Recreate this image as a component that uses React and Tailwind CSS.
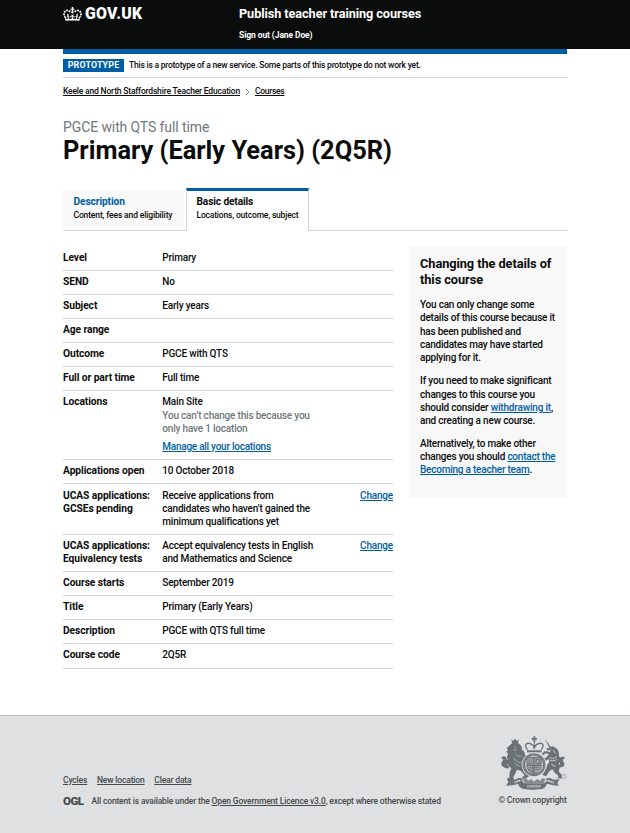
import React from "react";

const link = "underline decoration-1 underline-offset-[1px]";
const blueLink = `${link} text-[#005ea5]`;

function Crown() {
  return (
    <svg viewBox="0 0 132 97" className="h-[14px] w-[19px] shrink-0" fill="#fff">
      <path
        fillRule="evenodd"
        d="M25 30.2c3.5 1.5 7.7-.2 9.1-3.7 1.5-3.6-.2-7.8-3.9-9.2-3.6-1.4-7.6.3-9.1 3.9-1.4 3.5.3 7.5 3.9 9zM9 39.5c3.6 1.5 7.8-.2 9.2-3.7 1.5-3.6-.2-7.8-3.9-9.1-3.6-1.5-7.6.2-9.1 3.8-1.4 3.5.3 7.5 3.8 9zM4.4 57.2c3.5 1.5 7.7-.2 9.1-3.8 1.5-3.6-.2-7.7-3.9-9.1-3.5-1.5-7.6.3-9.1 3.8-1.4 3.5.3 7.6 3.9 9.1zm38.3-21.4c3.5 1.5 7.7-.2 9.1-3.8 1.5-3.6-.2-7.7-3.9-9.1-3.6-1.5-7.6.3-9.1 3.8-1.3 3.6.4 7.7 3.9 9.1zm64.4-5.6c-3.6 1.5-7.8-.2-9.1-3.7-1.5-3.6.2-7.8 3.8-9.2 3.6-1.4 7.7.3 9.2 3.9 1.3 3.5-.4 7.5-3.9 9zm15.9 9.3c-3.6 1.5-7.7-.2-9.1-3.7-1.5-3.6.2-7.8 3.7-9.1 3.6-1.5 7.7.2 9.2 3.8 1.5 3.5-.3 7.5-3.8 9zm4.7 17.7c-3.6 1.5-7.8-.2-9.2-3.8-1.5-3.6.2-7.7 3.9-9.1 3.6-1.5 7.7.3 9.2 3.8 1.3 3.5-.4 7.6-3.9 9.1zM89.3 35.8c-3.6 1.5-7.8-.2-9.2-3.8-1.4-3.6.2-7.7 3.9-9.1 3.6-1.5 7.7.3 9.2 3.8 1.4 3.6-.3 7.7-3.9 9.1zM69.7 17.7l8.9 4.7V9.3l-8.9 2.8c-.2-.3-.5-.6-.9-.9L72.4 0H59.6l3.5 11.2c-.3.3-.6.5-.9.9l-8.8-2.8v13.1l8.8-4.7c.3.3.6.7.9.9l-5 15.4v.1c-.2.8-.4 1.6-.4 2.4 0 4.1 3.1 7.5 7 8.1h.2c.3 0 .7.1 1 .1.4 0 .7 0 1-.1h.2c4-.6 7.1-4.1 7.1-8.1 0-.8-.1-1.7-.4-2.4V34l-5.1-15.4c.4-.2.7-.6 1-.9zM66 92.8c16.9 0 32.8 1.1 47.1 3.2 4-16.9 8.9-26.7 14-33.5l-9.6-3.4c1 4.9 1.1 7.2 0 10.2-1.5-1.4-3-4.3-4.2-8.7L108.6 76c2.8-2 5-3.2 7.5-3.3-4.4 9.4-10 11.9-13.6 11.2-4.3-.8-6.3-4.6-5.6-7.9 1-4.7 5.7-5.9 8-.5 4.3-8.7-3-11.4-7.6-8.8 7.1-7.2 7.9-13.5 2.1-21.1-8 6.1-8.1 12.3-4.5 20.8-4.7-5.4-12.1-2.5-9.5 6.2 3.4-5.2 7.9-2 7.2 3.1-.6 4.3-6.4 7.8-13.5 7.2-10.3-.9-10.9-8-11.2-13.8 2.5-.5 7.1 1.8 11 7.3L80.2 60c-4.1 4.4-8 5.3-12.3 5.4 1.4-4.4 8-11.6 8-11.6H55.5s6.4 7.2 7.9 11.6c-4.2-.1-8-1-12.3-5.4l1.4 16.4c3.9-5.5 8.5-7.7 10.9-7.3-.3 5.8-.9 12.8-11.1 13.8-7.2.6-12.9-2.9-13.5-7.2-.7-5 3.8-8.3 7.1-3.1 2.7-8.7-4.6-11.6-9.4-6.2 3.7-8.5 3.6-14.7-4.6-20.8-5.8 7.6-5 13.9 2.2 21.1-4.7-2.6-11.9.1-7.7 8.8 2.3-5.5 7.1-4.2 8.1.5.7 3.3-1.3 7.1-5.7 7.9-3.5.7-9-1.8-13.5-11.2 2.5.1 4.7 1.3 7.5 3.3l-4.7-15.4c-1.2 4.4-2.7 7.2-4.3 8.7-1.1-3-.9-5.3 0-10.2l-9.5 3.4c5 6.9 9.9 16.7 14 33.5 14.8-2.1 30.8-3.2 47.7-3.2z"
      />
    </svg>
  );
}

/* Royal coat of arms: lion, crowned garter shield, unicorn, motto ribbon */
function Crest() {
  return (
    <svg viewBox="0 0 228 192" className="h-16 w-[76px] shrink-0" fill="#6b7276" stroke="none">
      {/* crown */}
      <path d="M115 13h6v5h5v5h-5v6h-6v-6h-5v-5h5z" />
      <g fill="none" stroke="#6b7276" strokeWidth="4">
        <path d="M98 53C86 40 93 32 103 34c8 2 14 6 15 16 1-10 7-14 15-16 10-2 17 6 5 19" />
        <path d="M118 30v20" strokeWidth="3" />
        <path d="M96 58h44" strokeWidth="6" />
      </g>
      {/* lion */}
      <path d="M49 22l5 5 6-7 6 7 5-5-2 11H51z" />
      <path d="M49 35c6-4 20-4 25 1 6 6 8 12 6 18 8 2 10 8 9 14l8 4-3 7-9-1c4 8 6 16 4 23l-1 4c4 6 8 10 11 14 4 6 5 11 1 16l-14 6-6-4 9-7-12-14-12-3c-2 8-6 16-10 21l4 12-21 1-2-7 8-4c-3-9 2-20 5-28-6-2-9-6-11-12l-7 6-8-3 5-6-6-5 16-5c-3-7-2-13 2-18l-7-6 6-4-4-6z" />
      <path d="M40 110c-20-3-25-14-18-22 4-5 2-9-4-8 4-12 20-7 17 5-3 8-6 13 7 17z" />
      <path d="M57 44l7 2M56 54l9-2M62 66c5 7 11 8 18 7M56 78c6 10 14 14 24 15M58 92c5 7 10 9 16 10" fill="none" stroke="#c6c9cb" strokeWidth="2" />
      {/* unicorn */}
      <path d="M149 20l21 28-4 4z" />
      <path d="M164 48l8-6 5 4c11 3 16 14 15 25 5 8 4 17-1 23 4 8 3 17 0 24l11 13-3 9-10-2 1-6-12-11-6-9-8 5-11 16-11-4 12-20c2-9 4-15 9-19l-2-9-10 6-8-3 1-6 9-1 9-11-11-2-6 6-5-4 9-9 15 3 5-8-11 5-4-8z" />
      <path d="M189 107c18 0 23-8 17-17-4-6-2-11 6-12-12-9-25 1-19 12 3 6 2 9-5 9z" />
      <path d="M163 76c8 5 17 3 23-3M165 85c8 3 16 1 21-3M175 55l6 9M169 97l12 6" fill="none" stroke="#dee0e2" strokeWidth="2.4" />
      {/* garter and shield */}
      <circle cx="117" cy="98" r="37" fill="#dee0e2" />
      <circle cx="117" cy="98" r="33" fill="#c2c5c8" />
      <circle cx="117" cy="98" r="31" fill="none" stroke="#6b7276" strokeWidth="7" />
      <circle cx="117" cy="98" r="31" fill="none" stroke="#b9bdc0" strokeWidth="2" strokeDasharray="3 3" />
      <path d="M96 77h42v25c0 12-12 19-21 24-9-5-21-12-21-24z" fill="#a3a8ab" stroke="#6b7276" strokeWidth="3" />
      <path d="M117 77v48M96 100h42" stroke="#6b7276" strokeWidth="4" />
      <path d="M100 84h13M100 90h13M100 95h13M121 106h13M121 112h11" stroke="#6b7276" strokeWidth="3.4" strokeDasharray="5 2" />
      <path d="M123 82h11v13h-11zM101 115l4-10 5 4 3-5v14z" fill="none" stroke="#6b7276" strokeWidth="3" />
      {/* ribbon */}
      <path d="M40 144l20-1c8-5 17-7 23-3-3 6 0 11 5 14l58 0c7-3 9-8 6-14 8-4 17-2 23 3l20-1-8 9 4 10-18-1c-9-2-12-5-18-3-3 10-11 15-21 15-18 2-34 1-48-1-9-1-14-7-16-14-7-2-12 2-19 3l-18 1 6-9z" />
      <path d="M58 152c8-1 11-6 18-6M154 146c8-1 14 4 22 6M97 163h40" fill="none" stroke="#dee0e2" strokeWidth="5" />
      <path d="M60 152l15-5M156 147l18 5M99 163h37" fill="none" stroke="#6b7276" strokeWidth="3" strokeDasharray="3 2" />
      <path d="M88 153l-4-12 8-4 8 9 8-5 9 8 10-8 8 5 8-8 8 4-5 11-29 4z" fill="#858b8f" />
      <path d="M187 126c8 4 4 12-3 10M199 130c9-6 18 0 11 8-6 4-12 0-11-8" fill="none" stroke="#858b8f" strokeWidth="2" />
    </svg>
  );
}

function Row({ h, pad = "pt-1", label, action, children }) {
  return (
    <div className={`${h} ${pad} flex border-b border-[#d3d5d6]`}>
      <dt className="w-[99.3px] shrink-0 whitespace-nowrap text-[10.25px] font-bold tracking-[-0.08px]">{label}</dt>
      <dd className="grow whitespace-nowrap">{children}</dd>
      {action && <dd className="shrink-0"><a className={blueLink}>Change</a></dd>}
    </div>
  );
}

export default function App() {
  return (
    <div className="flex h-[833px] w-[630px] flex-col overflow-hidden bg-white font-['Roboto','Liberation_Sans',sans-serif] text-[10px] leading-[13.1px] font-medium tracking-[-0.19px] text-[#0b0c0c]">
      <header className="h-[49px] shrink-0 bg-[#0b0c0c] px-[63px] text-white">
        <div className="flex">
          <div className="flex w-[176px] items-center gap-[3px] self-start pt-[5px]">
            <Crown />
            <span className="text-[15.8px] leading-[18px] font-black tracking-[0.3px]">GOV.UK</span>
          </div>
          <div className="font-bold">
            <div className="pt-[5px] text-[12.7px] leading-[18px] tracking-[-0.07px]">Publish teacher training courses</div>
            <div className="pt-[6px] text-[8.5px] leading-3 tracking-[-0.1px]">Sign out (Jane Doe)</div>
          </div>
        </div>
      </header>

      <div className="mx-[63px] h-[5px] shrink-0 bg-[#005ea5]" />

      <main className="mx-[63px] flex h-[661px] shrink-0 flex-col">
        <div className="flex h-6 shrink-0 items-center gap-[5px] border-b border-[#d3d5d6]">
          <strong className="flex h-[13px] w-[61px] items-center justify-center bg-[#005ea5] text-[8.8px] tracking-[0.2px] text-white">PROTOTYPE</strong>
          <span className="pt-px text-[8.5px] tracking-[-0.22px] whitespace-nowrap">This is a prototype of a new service. Some parts of this prototype do not work yet.</span>
        </div>

        <nav className="flex h-[26px] shrink-0 items-center pt-px text-[8.5px] tracking-[-0.18px]">
          <a className={link}>Keele and North Staffordshire Teacher Education</a>
          <svg viewBox="0 0 5 8" className="mx-[5px] h-2 w-[5px]" fill="none" stroke="#8a8f92"><path d="M1 1l3 3-3 3" /></svg>
          <a className={`${link} tracking-[-0.29px]`}>Courses</a>
        </nav>

        <div className="mt-[14px] text-[14px] leading-[18px] font-normal tracking-[-0.1px] text-[#6f777b]">PGCE with QTS full time</div>
        <h1 className="mt-px text-[25.4px] leading-[26px] font-bold tracking-[0px]">Primary (Early Years) (2Q5R)</h1>

        <div className="mt-[25px] flex h-[43px] shrink-0 text-[8.5px] leading-[13px] tracking-[-0.14px] whitespace-nowrap">
          <div className="w-[122.5px] border-b border-[#d3d5d6] pt-[2px]">
            <div className="h-[37px] w-[121px] bg-[#f8f8f8] px-[10.5px] pt-[5px]">
              <div className="text-[10.2px] font-bold tracking-[-0.1px] text-[#005ea5]">Description</div>
              <div className="pt-px">Content, fees and eligibility</div>
            </div>
          </div>
          <div className="w-[123.5px] border-x border-t-[3px] border-x-[#d3d5d6] border-t-[#005ea5] px-[10px] pt-1">
            <div className="text-[10.2px] font-bold">Basic details</div>
            <div className="pt-px tracking-[-0.18px]">Locations, outcome, subject</div>
          </div>
          <div className="grow border-b border-[#d3d5d6]" />
        </div>

        <div className="mt-[15px] flex items-start justify-between">
          <dl className="w-[330px]">
            <Row h="h-[25px]" pad="pt-[5px]" label="Level">Primary</Row>
            <Row h="h-6" label="SEND">No</Row>
            <Row h="h-6" label="Subject">Early years</Row>
            <Row h="h-6" label="Age range" />
            <Row h="h-6" label="Outcome">PGCE with QTS</Row>
            <Row h="h-6" label="Full or part time">Full time</Row>
            <Row h="h-[69px]" label="Locations">
              Main Site
              <div className="mt-[0.6px] text-[#6f777b]">You can’t change this because you<br />only have 1 location</div>
              <div className="mt-[5px]"><a className={`${blueLink} tracking-[-0.25px]`}>Manage all your locations</a></div>
            </Row>
            <Row h="h-6" label="Applications open">10 October 2018</Row>
            <Row h="h-[51px]" pad="pt-[5px]" label={<>UCAS applications:<br />GCSEs pending</>} action>
              Receive applications from<br />candidates who haven’t gained the<br />minimum qualifications yet
            </Row>
            <Row h="h-[37px]" label={<>UCAS applications:<br />Equivalency tests</>} action>
              Accept equivalency tests in English<br />and Mathematics and Science
            </Row>
            <Row h="h-6" label="Course starts">September 2019</Row>
            <Row h="h-6" label="Title">Primary (Early Years)</Row>
            <Row h="h-6" label="Description">PGCE with QTS full time</Row>
            <Row h="h-[25px]" label="Course code">2Q5R</Row>
          </dl>

          <aside className="h-[252px] w-[157.5px] bg-[#f8f8f8] px-[10.5px] pt-[10px] leading-[13.25px] whitespace-nowrap">
            <h2 className="text-[12.8px] leading-4 font-bold tracking-[-0.08px]">Changing the details of<br />this course</h2>
            <p className="mt-[10px] tracking-[-0.22px]">You can only change some<br />details of this course because it<br />has been published and<br />candidates may have started<br />applying for it.</p>
            <p className="mt-[10px]">If you need to make significant<br />changes to this course you<br />should consider <a className={blueLink}>withdrawing it</a>,<br />and creating a new course.</p>
            <p className="mt-[9.5px] tracking-[-0.22px]">Alternatively, to make other<br />changes you should <a className={blueLink}>contact the</a><br /><a className={blueLink}>Becoming a teacher team</a>.</p>
          </aside>
        </div>
      </main>

      <footer className="flex grow items-start justify-between border-t border-[#bfc1c3] bg-[#dee0e2] px-[63px] text-[8.5px] leading-3 tracking-[-0.16px] whitespace-nowrap text-[#454a4c]">
        <div className="pt-[57.5px]">
          <div className="flex gap-[9.7px]">
            <a className={link}>Cycles</a>
            <a className={link}>New location</a>
            <a className={link}>Clear data</a>
          </div>
          <div className="mt-[9px] flex">
            <span className="w-[28.5px] text-[11.5px] font-black tracking-[-0.5px]">OGL</span>
            <span>All content is available under the <a className={link}>Open Government Licence v3.0</a>, except where otherwise stated</span>
          </div>
        </div>
        <div className="flex w-[69px] flex-col items-center pt-4">
          <Crest />
          <span className="-mt-0.5">© Crown copyright</span>
        </div>
      </footer>
    </div>
  );
}
